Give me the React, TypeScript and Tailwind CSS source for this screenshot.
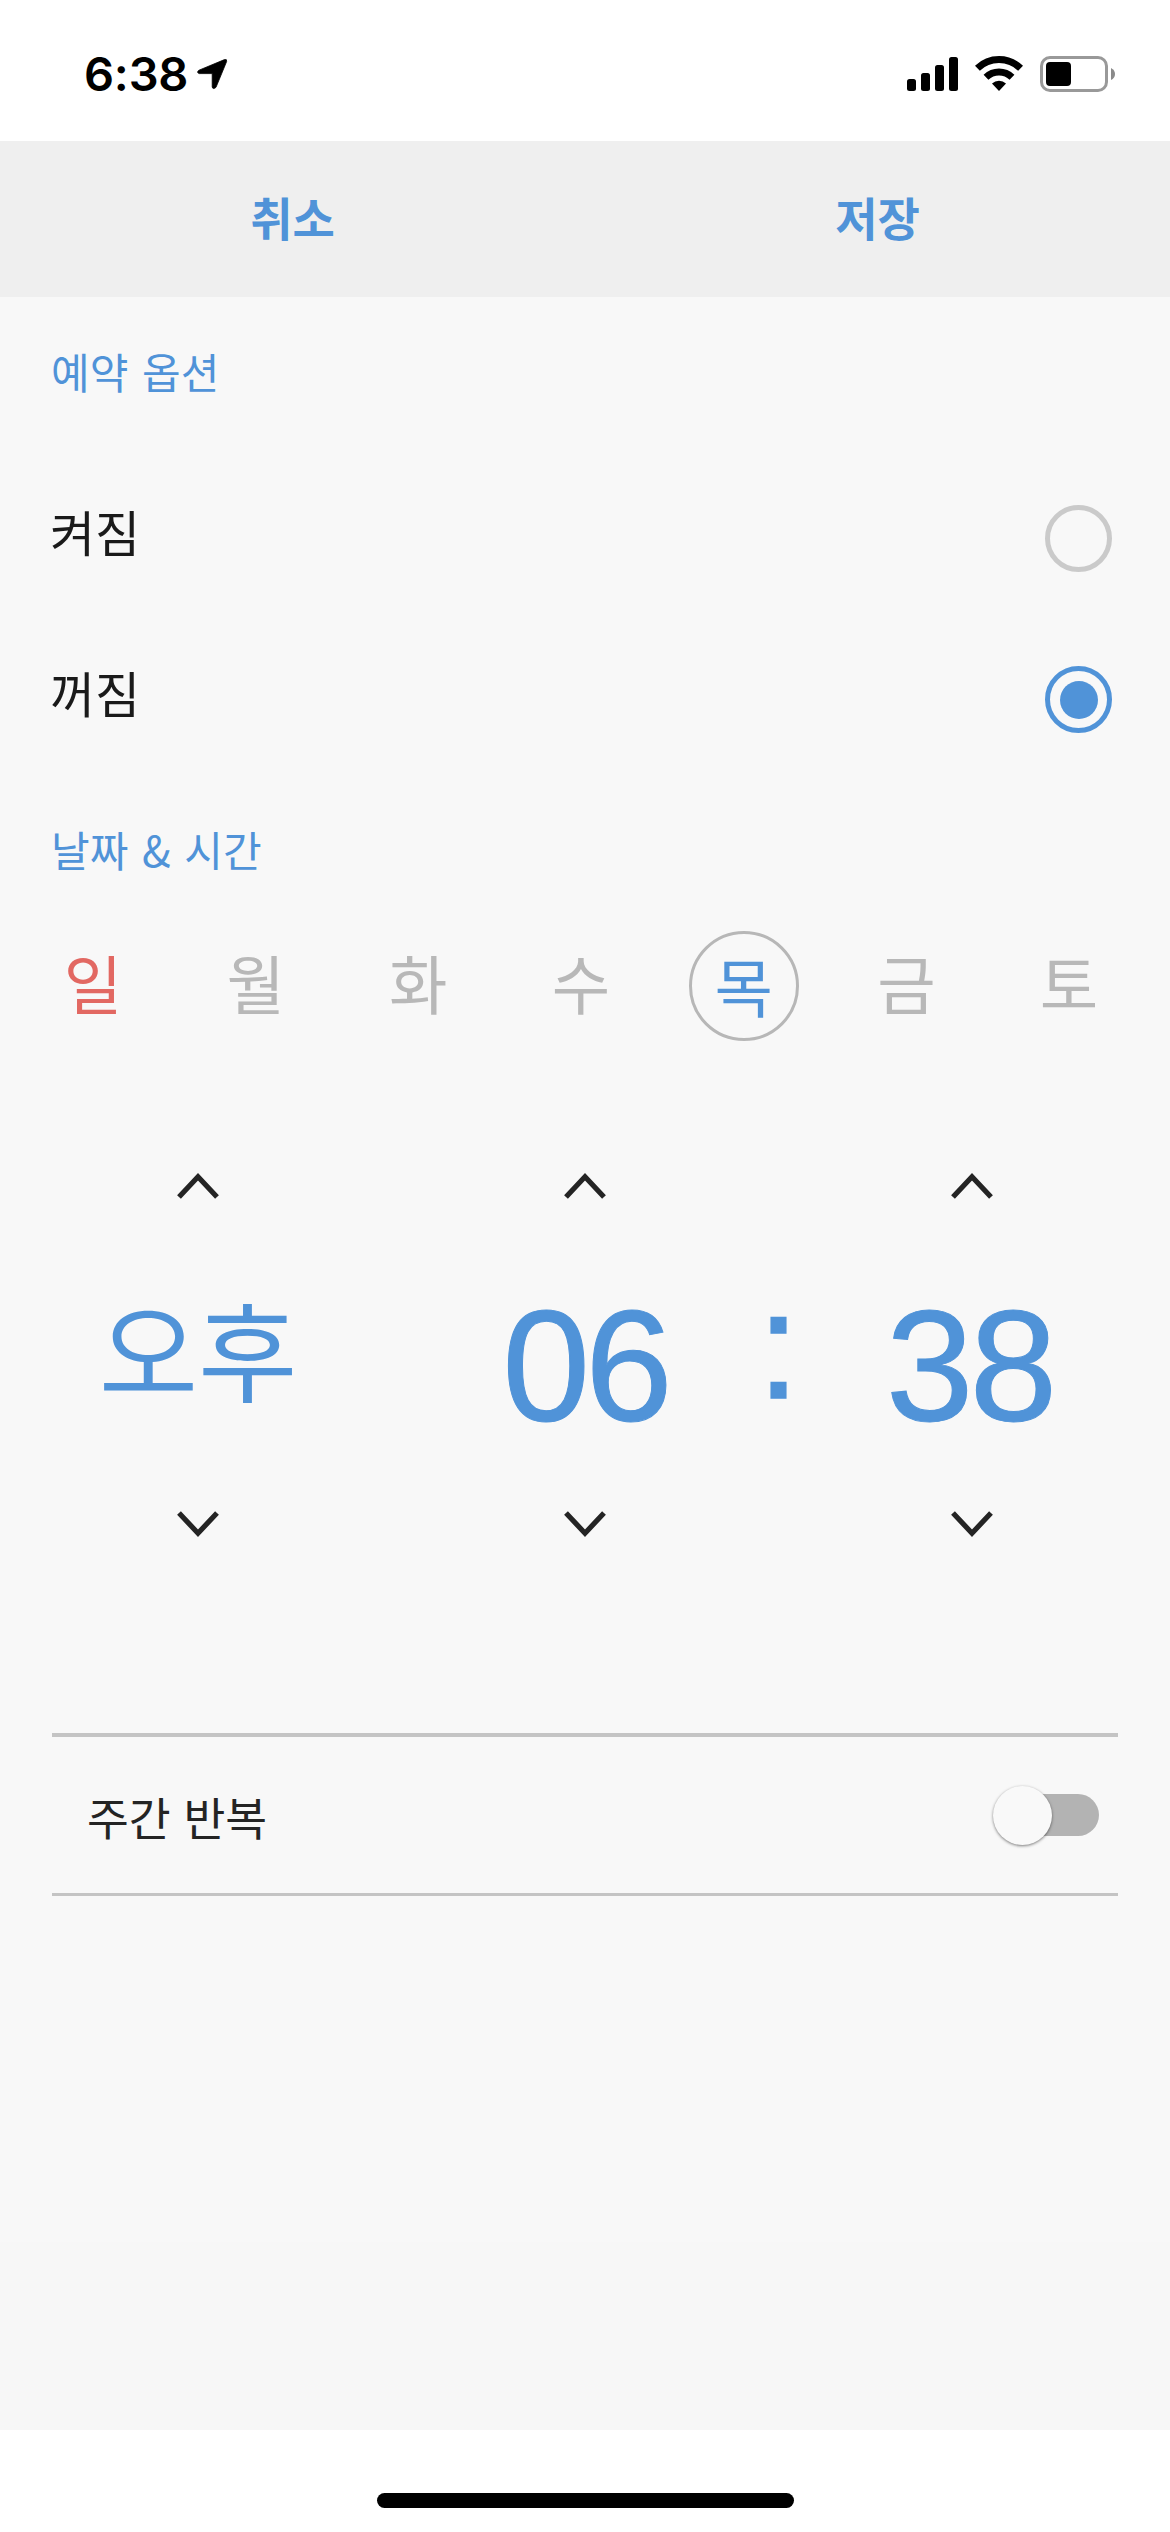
import React, { useState } from "react";
import clsx from "clsx";

const DAYS = ["일", "월", "화", "수", "목", "금", "토"];

const StatusBar: React.FC = () => (
  <div className="flex h-[141px] shrink-0 items-start justify-between bg-white pl-[84px] pr-[55px]">
    <div className="flex pt-[50px]">
      <span className="w-[113px] font-['Inter',sans-serif] text-[47px] font-semibold leading-[48px] tracking-[-0.2px] text-black">
        6:38
      </span>
      <svg className="mt-[8px]" width="31" height="32" viewBox="0 0 31 32">
        <path
          d="M2 12.2 L27.5 1.6 Q30.2 0.8 29.6 3.6 L19 29.3 Q16 32 15.2 29 V15.6 H2.2 Q-1 14.4 2 12.2 Z"
          fill="#000"
          stroke="#000"
          strokeWidth="0.8"
          strokeLinejoin="round"
        />
      </svg>
    </div>

    <div className="flex pt-[55px]">
      {/* Signal */}
      <svg width="51" height="37" viewBox="0 0 51 37">
        <rect x="0" y="24" width="9" height="12" rx="2.5" />
        <rect x="14" y="18" width="9" height="18" rx="2.5" />
        <rect x="28" y="10" width="9" height="26" rx="2.5" />
        <rect x="42" y="2" width="9" height="34" rx="2.5" />
      </svg>
      {/* Wifi */}
      <svg className="ml-[17px]" width="48" height="37" viewBox="0 0 48 37">
        <g fill="none" stroke="#000" strokeWidth="7">
          <path d="M2.4 13.3 A31 31 0 0 1 45.6 13.3" />
          <path d="M11 22.3 A18.8 18.8 0 0 1 37 22.3" />
        </g>
        <path d="M24 36 L17 28.6 A10.2 10.2 0 0 1 31 28.6 Z" />
      </svg>
      {/* Battery */}
      <svg className="ml-[17px]" width="75" height="37" viewBox="0 0 75 37">
        <rect x="1.5" y="2.5" width="65" height="33" rx="8.5" fill="none" stroke="#999" strokeWidth="3" />
        <rect x="6" y="7" width="25" height="24" rx="4" />
        <path d="M71 13 Q75 15 75 19 Q75 23 71 25 Z" fill="#8a8a8a" />
      </svg>
    </div>
  </div>
);

const Chevron: React.FC<{ down?: boolean }> = ({ down }) => (
  <button type="button" className="block">
    <svg
      className={clsx(down && "rotate-180")}
      width="42"
      height="26"
      viewBox="0 0 42 26"
      fill="none"
      stroke="#242424"
      strokeWidth="5.2"
    >
      <path d="M2 24 L21 3.8 L40 24" />
    </svg>
  </button>
);

const PickerColumn: React.FC<{ children: React.ReactNode }> = ({ children }) => (
  <div className="flex w-[387px] flex-col items-center">
    <Chevron />
    <div className="flex h-[312px] items-center text-[#5093d8]">{children}</div>
    <Chevron down />
  </div>
);

const OptionRow: React.FC<{ label: string; checked: boolean; onSelect: () => void }> = ({
  label,
  checked,
  onSelect,
}) => (
  <button
    type="button"
    onClick={onSelect}
    className="flex h-[161px] w-full items-center justify-between pl-[50px] pr-[58px]"
  >
    <span className="pb-[16px] text-[49px] leading-[60px] text-[#1a1a1a]">{label}</span>
    <span
      className={clsx(
        "flex size-[67px] items-center justify-center rounded-full border-5",
        checked ? "border-[#5093d8]" : "border-[#cacaca]"
      )}
    >
      {checked && <span className="size-[38px] rounded-full bg-[#5093d8]" />}
    </span>
  </button>
);

const App: React.FC = () => {
  const [mode, setMode] = useState("off");
  const [day, setDay] = useState("목");

  return (
    <div
      lang="ko"
      className="flex h-[2532px] w-[1170px] flex-col overflow-hidden bg-[#f8f8f8] font-['Noto_Sans_CJK_KR',sans-serif]"
    >
      <StatusBar />

      {/* Header */}
      <div className="grid h-[156px] shrink-0 grid-cols-2 bg-[#efefef] pb-[6px] text-[46px] font-bold leading-[60px] text-[#5093d8]">
        <button type="button">취소</button>
        <button type="button">저장</button>
      </div>

      {/* On / off option */}
      <h2 className="mb-[13px] flex h-[148px] items-center pl-[51px] text-[42px] leading-[60px] text-[#5093d8] [word-spacing:2px]">
        예약 옵션
      </h2>
      <OptionRow label="켜짐" checked={mode === "on"} onSelect={() => setMode("on")} />
      <OptionRow label="꺼짐" checked={mode === "off"} onSelect={() => setMode("off")} />

      {/* Day of week */}
      <h2 className="flex h-[138px] items-center pl-[51px] text-[42px] leading-[60px] text-[#5093d8] [word-spacing:2px]">
        날짜 &amp; 시간
      </h2>
      <div className="flex h-[136px] items-center justify-center pr-[8px]">
        {DAYS.map((d) => (
          <div key={d} className="flex w-[162.7px] justify-center">
            <button
              type="button"
              onClick={() => setDay(d)}
              className={clsx(
                "flex size-[110px] items-center justify-center rounded-full text-[63.5px] leading-[80px]",
                d === day
                  ? "border-3 border-[#b7b7b7] pb-[4px] text-[#5093d8]"
                  : d === "일"
                    ? "pb-[10px] text-[#e26862]"
                    : "pb-[10px] text-[#b8b8b8]"
              )}
            >
              {d}
            </button>
          </div>
        ))}
      </div>

      {/* Time picker */}
      <div className="mt-[119px] flex items-center justify-center">
        <PickerColumn>
          <span className="pb-[16px] text-[108px] leading-[120px]">오후</span>
        </PickerColumn>
        <PickerColumn>
          <span className="pt-[20px] font-['Liberation_Sans',sans-serif] text-[158px] leading-[160px] tracking-[-5px] [-webkit-text-stroke:1px]">
            06
          </span>
        </PickerColumn>
        <div className="flex w-0 justify-center pb-[20px] font-['Liberation_Sans',sans-serif] text-[153px] leading-[160px] text-[#5093d8] [-webkit-text-stroke:1.5px]">
          :
        </div>
        <PickerColumn>
          <span className="pr-[5px] pt-[20px] font-['Liberation_Sans',sans-serif] text-[158px] leading-[160px] tracking-[-4px] [-webkit-text-stroke:1px]">
            38
          </span>
        </PickerColumn>
      </div>

      {/* Weekly repeat */}
      <div className="mx-[52px] mt-[196px] flex h-[163px] items-center justify-between border-b-3 border-t-4 border-[#c4c4c4] pl-[35px] pr-[19px]">
        <span className="pt-[2px] text-[45.5px] leading-[60px] text-[#242424]">주간 반복</span>
        <div className="flex h-[42px] w-[104px] items-center rounded-full bg-[#b3b3b3]">
          <span className="-ml-[2px] size-[59px] rounded-full bg-[#f9f9f9] shadow-[0_1px_3px_rgba(0,0,0,0.5)]" />
        </div>
      </div>

      <div className="mt-auto h-[188px] bg-[#f7f7f7]" />
      <div className="flex h-[102px] shrink-0 justify-center bg-white pt-[63px]">
        <div className="h-[15px] w-[417px] rounded-full bg-black" />
      </div>
    </div>
  );
};

export default App;
